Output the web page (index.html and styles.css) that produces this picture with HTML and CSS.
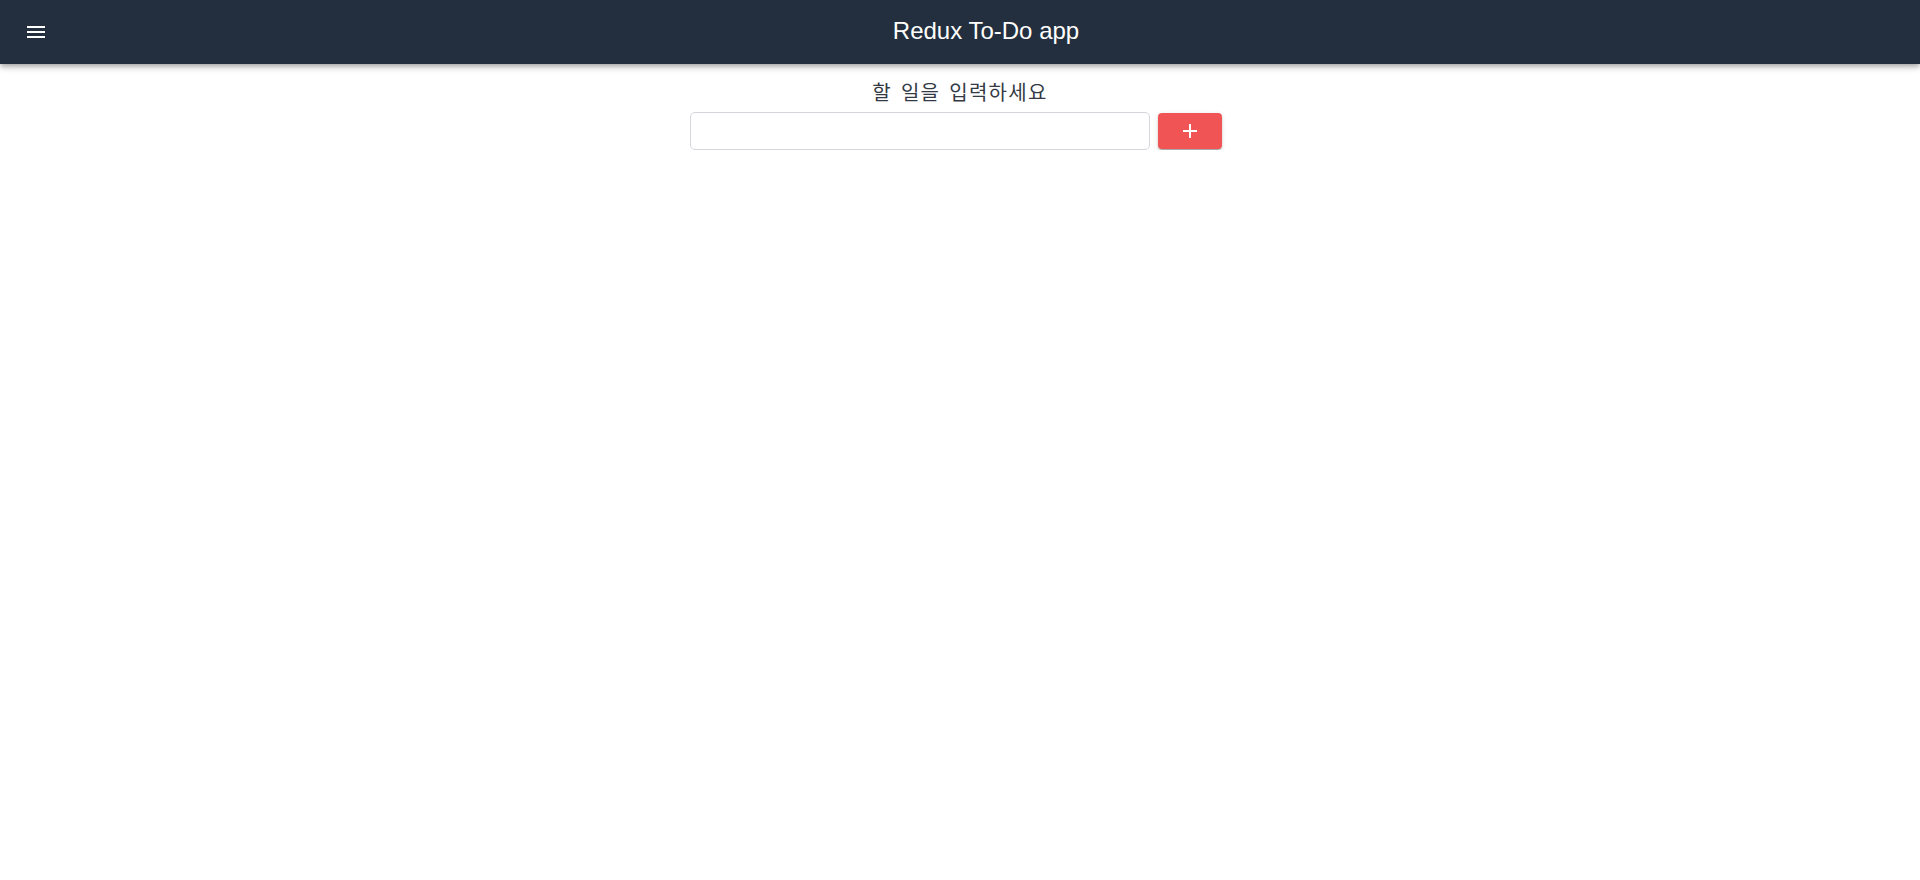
FILE: index.html
```html
<!DOCTYPE html>
<html lang="ko">
<head>
<meta charset="utf-8">
<title>Redux To-Do app</title>
<link rel="stylesheet" href="styles.css">
</head>
<body>
<header class="appbar">
  <button class="menu-btn" aria-label="menu">
    <svg viewBox="0 0 24 24" width="24" height="24"><path fill="#fff" d="M3 18h18v-2H3v2zm0-5h18v-2H3v2zm0-7v2h18V6H3z"/></svg>
  </button>
  <h1 class="title">Redux To-Do app</h1>
</header>
<main class="content">
  <form class="todo-form">
    <label class="todo-label" for="todo">할 일을 입력하세요</label>
    <div class="todo-row">
      <input id="todo" class="todo-input" type="text">
      <button type="button" class="add-btn">
        <svg viewBox="0 0 24 24" width="24" height="24"><path fill="#fff" d="M19 13h-6v6h-2v-6H5v-2h6V5h2v6h6v2z"/></svg>
      </button>
    </div>
  </form>
</main>
</body>
</html>
```
FILE: styles.css
```css
html, body {
  margin: 0;
  padding: 0;
  background: #fff;
  font-family: "Liberation Sans", Arial, sans-serif;
}
.appbar {
  height: 64px;
  background: #232f3e;
  display: flex;
  align-items: center;
  padding-left: 12px;
  box-shadow: 0 2px 4px -1px rgba(0,0,0,0.2), 0 4px 5px 0 rgba(0,0,0,0.14), 0 1px 10px 0 rgba(0,0,0,0.12);
  position: relative;
  z-index: 1;
}
.menu-btn {
  width: 48px;
  height: 48px;
  padding: 12px;
  border: 0;
  background: transparent;
  display: flex;
  align-items: center;
  justify-content: center;
}
.title {
  flex: 1;
  margin: 0 0 2px 0;
  text-align: center;
  color: #fff;
  font-weight: 400;
  font-size: 24px;
  padding-right: 8px;
}
.content {
  display: flex;
  justify-content: center;
  padding-top: 13px;
  padding-right: 8px;
}
.todo-form {
  display: flex;
  flex-direction: column;
  align-items: center;
}
.todo-label {
  font-family: "Noto Sans CJK KR", "Noto Sans", sans-serif;
  font-size: 20px;
  letter-spacing: 1.3px;
  word-spacing: 2px;
  color: #333a44;
  line-height: 30px;
  margin-bottom: 5px;
  margin-left: 8px;
}
.todo-row {
  display: flex;
  align-items: center;
  gap: 8px;
}
.todo-input {
  width: 460px;
  height: 38px;
  box-sizing: border-box;
  border: 1px solid #d4d6dc;
  border-radius: 5px;
  padding: 0 10px;
  font-size: 16px;
  outline: none;
}
.add-btn {
  width: 64px;
  height: 36px;
  border: 0;
  border-radius: 4px;
  background: #f05455;
  display: flex;
  align-items: center;
  justify-content: center;
  box-shadow: 0 3px 1px -2px rgba(0,0,0,0.2), 0 2px 2px 0 rgba(0,0,0,0.14), 0 1px 5px 0 rgba(0,0,0,0.12);
  padding: 0;
}
```
